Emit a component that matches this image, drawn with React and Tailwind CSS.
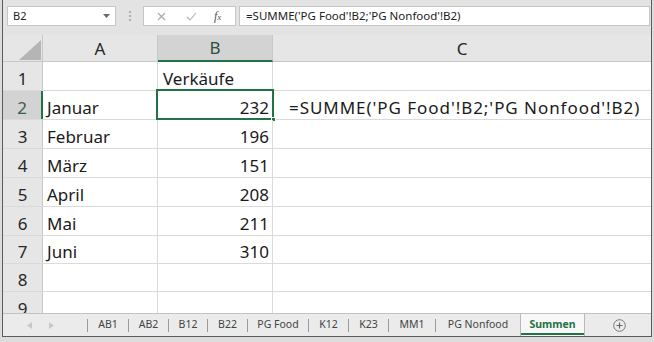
import React from "react";

const rows = [
  { n: "1", a: "", b: "Verkäufe", bLeft: true, c: "", h: "h-[29px]" },
  { n: "2", a: "Januar", b: "232", c: "=SUMME('PG Food'!B2;'PG Nonfood'!B2)", h: "h-[29px]", sel: true },
  { n: "3", a: "Februar", b: "196", c: "", h: "h-[29px]" },
  { n: "4", a: "März", b: "151", c: "", h: "h-[29px]" },
  { n: "5", a: "April", b: "208", c: "", h: "h-[29px]" },
  { n: "6", a: "Mai", b: "211", c: "", h: "h-[29px]" },
  { n: "7", a: "Juni", b: "310", c: "", h: "h-[28px]" },
  { n: "8", a: "", b: "", c: "", h: "h-[28px]" },
];

const tabs = [
  { t: "AB1", w: "w-[40px]" },
  { t: "AB2", w: "w-[39px]" },
  { t: "B12", w: "w-[38px]" },
  { t: "B22", w: "w-[39px]" },
  { t: "PG Food", w: "w-[60px]" },
  { t: "K12", w: "w-[39px]" },
  { t: "K23", w: "w-[39px]" },
  { t: "MM1", w: "w-[46px]" },
  { t: "PG Nonfood", w: "w-[84px]" },
];

function Row({ r }) {
  return (
    <div className={`flex ${r.h} border-b border-[#dadada] text-[17px] leading-[17px] text-[#1a1a1a]`}>
      <div
        className={`w-[40px] flex items-end justify-center pb-[3px] border-r ${
          r.sel ? "bg-[#d3d3d3] border-r-2 border-[#217346] text-[#3d5b49]" : "bg-[#e6e6e6] border-[#c8c8c8] text-[#262626]"
        }`}
      >
        {r.n}
      </div>
      <div className="w-[115px] flex items-end pl-[4px] pb-[3px] border-r border-[#dadada]">{r.a}</div>
      <div
        className={`relative w-[115px] flex items-end pb-[3px] border-r border-[#dadada] ${
          r.bLeft ? "pl-[5px]" : "justify-end pr-[3px]"
        }`}
      >
        {r.b}
        {r.sel && (
          <div className="absolute left-[-2px] top-[-2px] right-[-2px] bottom-[-1px] border-2 border-[#217346]">
            <div className="absolute right-[-4px] bottom-[-4px] w-[5px] h-[5px] bg-[#217346] border border-white" />
          </div>
        )}
      </div>
      <div className="flex-1 flex items-end pl-[16px] pb-[3px] whitespace-nowrap tracking-[0.95px]">{r.c}</div>
    </div>
  );
}

export default function App() {
  return (
    <div className="w-[654px] h-[342px] bg-[#dcdcdc] overflow-hidden font-['Noto_Sans','Open_Sans',sans-serif]">
      <div className="ml-[2px] mr-[2px] h-[337px] border-l border-r border-b border-[#5c5c5c] flex flex-col bg-white">
        {/* Formula bar */}
        <div className="h-[35px] bg-[#e3e3e3] pt-[6px] pl-[4px] pr-[1px] flex items-start shrink-0">
          <div className="w-[109px] h-[20px] bg-white border border-[#c6c6c6] flex items-center justify-between pl-[5px] pr-[5px] text-[11px] text-[#222]">
            <span>B2</span>
            <svg width="7" height="4" viewBox="0 0 7 4">
              <path d="M0 0 L7 0 L3.5 4 Z" fill="#6a6a6a" />
            </svg>
          </div>
          <div className="w-[27px] h-[20px] flex flex-col items-center justify-center gap-[2px]">
            <div className="w-[2px] h-[2px] bg-[#b0b0b0]" />
            <div className="w-[2px] h-[2px] bg-[#b0b0b0]" />
            <div className="w-[2px] h-[2px] bg-[#b0b0b0]" />
          </div>
          <div className="w-[93px] h-[20px] bg-white border border-[#c6c6c6] flex items-center">
            <svg className="ml-[13px]" width="9" height="9" viewBox="0 0 9 9">
              <path d="M1 1 L8 8 M8 1 L1 8" stroke="#a8a8a8" strokeWidth="1.1" />
            </svg>
            <svg className="ml-[20px]" width="11" height="9" viewBox="0 0 11 9">
              <path d="M1 5 L4 8 L10 1" stroke="#b0b0b0" strokeWidth="1.1" fill="none" />
            </svg>
            <span className="ml-[17px] font-['Liberation_Serif',serif] italic text-[12px] text-[#555] leading-none">
              f<span className="text-[9px]">x</span>
            </span>
          </div>
          <div className="ml-[3px] flex-1 h-[20px] bg-white border border-[#c6c6c6] flex items-center pl-[6px] text-[11.5px] text-[#222] whitespace-nowrap">
            =SUMME('PG Food'!B2;'PG Nonfood'!B2)
          </div>
        </div>

        {/* Column headers */}
        <div className="flex h-[27px] shrink-0 bg-[#e6e6e6] border-b border-[#c8c8c8] text-[17px] leading-[17px] text-[#262626]">
          <div className="w-[40px] border-r border-[#c8c8c8] relative">
            <svg className="absolute left-[16px] top-[5px]" width="22" height="20" viewBox="0 0 22 20">
              <path d="M22 0 L22 20 L0 20 Z" fill="#b5b5b5" />
            </svg>
          </div>
          <div className="w-[115px] border-r border-[#c8c8c8] flex items-center justify-center">A</div>
          <div className="w-[115px] border-r border-[#c8c8c8] bg-[#d3d3d3] border-b-2 border-b-[#217346] mb-[-1px] flex items-center justify-center text-[#2f4f3c]">
            B
          </div>
          <div className="flex-1 flex items-center justify-center">C</div>
        </div>

        {/* Rows */}
        <div className="shrink-0">
          {rows.map((r) => (
            <Row key={r.n} r={r} />
          ))}
        </div>
        <div className="flex-1 overflow-hidden">
          <Row r={{ n: "9", a: "", b: "", c: "", h: "h-[29px] shrink-0" }} />
        </div>

        {/* Tab bar */}
        <div className="h-[23px] shrink-0 bg-[#ebebeb] border-t border-[#c2c2c2] flex items-stretch text-[10.5px] text-[#444]">
          <div className="w-[84px] flex items-center">
            <svg className="ml-[24px]" width="5" height="7" viewBox="0 0 5 7">
              <path d="M5 0 L5 7 L0 3.5 Z" fill="#c8c8c8" />
            </svg>
            <svg className="ml-[17px]" width="5" height="7" viewBox="0 0 5 7">
              <path d="M0 0 L0 7 L5 3.5 Z" fill="#c8c8c8" />
            </svg>
          </div>
          {tabs.map((t) => (
            <React.Fragment key={t.t}>
              <div className="w-px h-[13px] self-center bg-[#9a9a9a]" />
              <div className={`${t.w} flex items-center justify-center`}>{t.t}</div>
            </React.Fragment>
          ))}
          <div className="w-[65px] bg-[#f7f7f7] border-x border-[#b8b8b8] flex items-center justify-center relative font-bold text-[#217346]">
            Summen
            <div className="absolute left-[0px] right-[0px] bottom-[1px] h-[2px] bg-[#217346]" />
          </div>
          <div className="flex-1 flex items-center pl-[28px]">
            <svg width="13" height="13" viewBox="0 0 13 13">
              <circle cx="6.5" cy="6.5" r="5.8" stroke="#777" strokeWidth="1" fill="none" />
              <path d="M6.5 3.5 L6.5 9.5 M3.5 6.5 L9.5 6.5" stroke="#666" strokeWidth="1.1" />
            </svg>
          </div>
        </div>
      </div>
    </div>
  );
}
